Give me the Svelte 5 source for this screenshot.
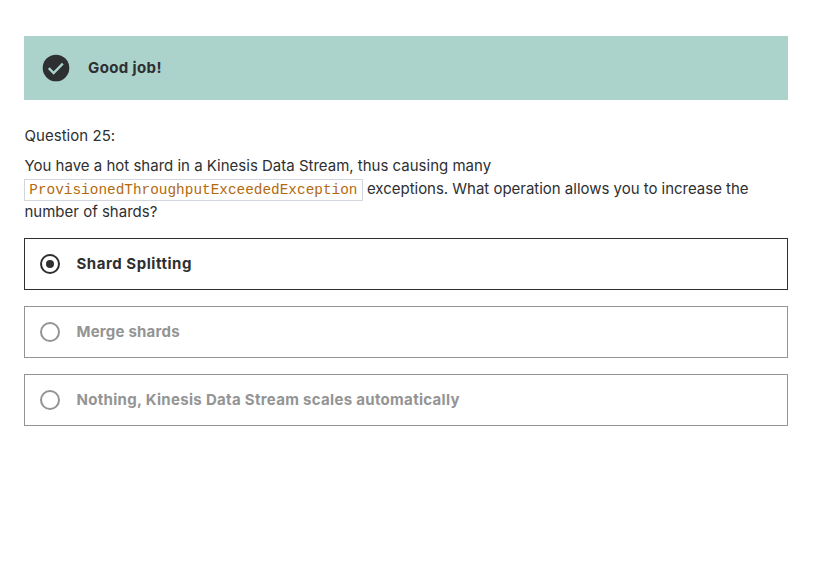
<script>
  const options = [
    { label: 'Shard Splitting', tracking: 0.54 },
    { label: 'Merge shards', tracking: 0.22 },
    { label: 'Nothing, Kinesis Data Stream scales automatically', tracking: 0.31 }
  ];
  let selected = $state(0);
</script>

<main>
  <div class="alert" role="status">
    <svg width="28" height="28" viewBox="0 0 28 28" aria-hidden="true">
      <circle cx="14" cy="14" r="13.3" fill="#2d2f31" />
      <path d="M6.8 14.2l4.8 4.8L20.8 9.7" fill="none" stroke="#acd2cc" stroke-width="2.4" />
    </svg>
    <strong>Good job!</strong>
  </div>
  <div class="label">Question 25:</div>
  <p><span class="first">You have a hot shard in a Kinesis Data Stream, thus causing many</span><br /><code>ProvisionedThroughputExceededException</code> <span class="second">exceptions. What operation allows you to increase the</span><br /><span class="first">number of shards?</span></p>
  <ul>
    {#each options as option, i}
      <li>
        <button class:selected={selected === i} onclick={() => (selected = i)}>
          <svg width="20" height="20" viewBox="0 0 20 20" aria-hidden="true">
            <circle cx="10" cy="10" r="9" fill="none" stroke="currentColor" stroke-width="2" />
            {#if selected === i}<circle cx="10" cy="10" r="4" fill="currentColor" />{/if}
          </svg>
          <span style:letter-spacing="{option.tracking}px">{option.label}</span>
        </button>
      </li>
    {/each}
  </ul>
</main>

<style>
  :global(body) { margin: 0; background: #fff; }
  main { box-sizing: border-box; padding: 36px 29px 0 24px; font-family: Inter, sans-serif; font-size: 15px; color: #2d2f31; }
  .alert { display: flex; align-items: center; box-sizing: border-box; height: 64px; padding-left: 18px; gap: 18px; background: #acd2cc; }
  strong { font-weight: 700; letter-spacing: 0.38px; padding-bottom: 2px; }
  .label { margin-top: 25px; padding-left: 0.5px; line-height: 22px; letter-spacing: 0.04px; }
  p { margin: 7px 0 15px; line-height: 23px; white-space: nowrap; }
  .first { padding-left: 0.5px; }
  .second { letter-spacing: -0.02px; }
  code { font: 14.4px/1 "Liberation Mono", monospace; color: #b4690e; border: 1px solid #d1d7dc; padding: 2px 4.3px; }
  ul { list-style: none; margin: 0; padding: 0; display: flex; flex-direction: column; gap: 16px; }
  button { display: flex; align-items: center; gap: 16.5px; width: 100%; height: 52px; box-sizing: border-box; padding: 0 15px; border: 1px solid #949494; border-radius: 0; background: #fff; color: #949494; font: 700 15px Inter, sans-serif; }
  button span { padding-bottom: 2px; }
  button.selected { border-color: #2d2f31; color: #2d2f31; }
</style>
